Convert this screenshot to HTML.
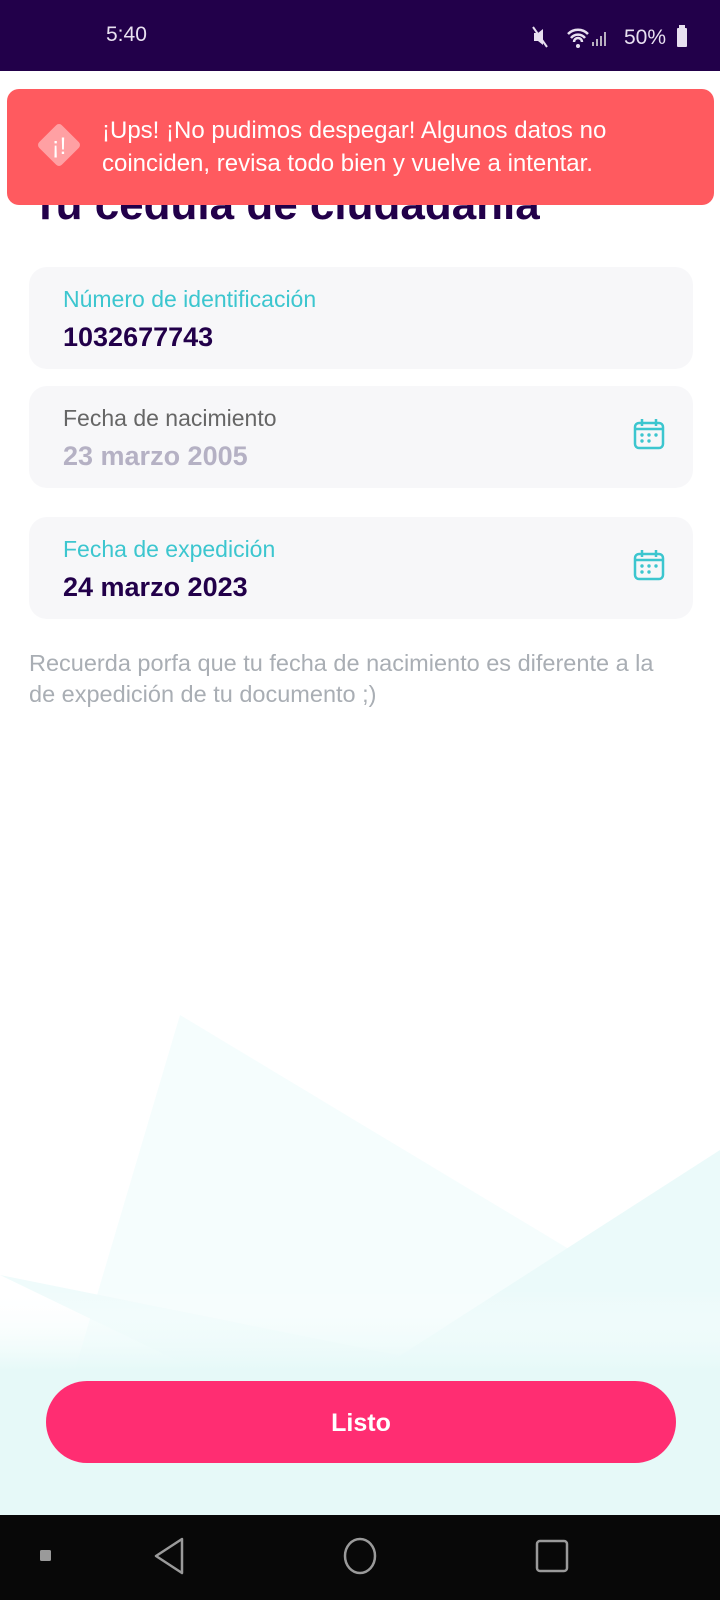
<!DOCTYPE html>
<html><head><meta charset="utf-8"><style>
*{margin:0;padding:0;box-sizing:border-box}
body{width:720px;height:1600px;position:relative;overflow:hidden;background:#fff;font-family:"Liberation Sans",sans-serif}
.sb{position:absolute;left:0;top:0;width:720px;height:71px;background:#22004a;color:#e8e0f0}
.bg{position:absolute;left:0;top:0;width:720px;height:1515px}
.title{position:absolute;left:32px;top:180px;font-size:44px;font-weight:bold;color:#22004a}
.toast{position:absolute;left:7px;top:89px;width:707px;height:116px;background:#ff5a5f;border-radius:12px;color:#fff}
.card{position:absolute;left:29px;width:664px;height:102px;background:#f7f7f9;border-radius:18px}
.lab{position:absolute;left:34px;top:19px;font-size:23px}
.val{position:absolute;left:34px;top:55px;font-size:27px;font-weight:bold}
.cal{position:absolute;right:28px;top:32px}
.note{position:absolute;left:29px;top:648px;font-size:23.5px;line-height:31px;color:#a9aeb4;width:690px}
.btn{position:absolute;left:46px;top:1381px;width:630px;height:82px;border-radius:41px;background:#ff2d72;color:#fff;font-weight:bold;font-size:25px;text-align:center;line-height:84px}
.nav{position:absolute;left:0;top:1515px;width:720px;height:85px;background:#080808}
</style></head><body>
<svg class="bg" viewBox="0 0 720 1515">
<defs><linearGradient id="g" x1="0" y1="0" x2="0" y2="1"><stop offset="0" stop-color="#ffffff" stop-opacity="0"/><stop offset="1" stop-color="#e6f9f8"/></linearGradient></defs>
<polygon points="180,1015 60,1420 720,1420 720,1340" fill="#f5fdfd"/>
<polygon points="0,1275 300,1420 720,1420 720,1420" fill="#effbfb"/>
<polygon points="720,1150 300,1420 720,1420" fill="#ebfafa"/>
<rect x="0" y="1290" width="720" height="80" fill="url(#g)"/>
<rect x="0" y="1370" width="720" height="145" fill="#e6f9f8"/>
</svg>
<div class="sb">
<div style="position:absolute;left:106px;top:23px;font-size:21px">5:40</div>
<svg style="position:absolute;left:532px;top:24px" width="160" height="26" viewBox="0 0 160 26">
<path d="M2 9h4l5-4v16l-5-4H2z" fill="#e8e0f0"/><path d="M1 3l14 20" stroke="#e8e0f0" stroke-width="2"/>
<path d="M36 10a14 14 0 0 1 20 0M39 14a9 9 0 0 1 14 0M42 18a4 4 0 0 1 8 0" stroke="#e8e0f0" stroke-width="2.5" fill="none"/><circle cx="46" cy="22" r="2" fill="#e8e0f0"/>
<path d="M60 22h2v-4h-2zM64 22h2v-7h-2zM68 22h2v-10h-2zM72 22h2v-14h-2z" fill="#b8b0c0"/>
<text x="92" y="20" font-size="21" fill="#e8e0f0" font-family="Liberation Sans">50%</text>
<rect x="145" y="4" width="10" height="19" rx="1" fill="#e8e0f0"/><rect x="147" y="1" width="6" height="3" fill="#e8e0f0"/>
</svg>
</div>
<div class="title">Tu cédula de ciudadanía</div>
<div class="toast">
<svg style="position:absolute;left:24px;top:28px" width="56" height="56" viewBox="0 0 56 56"><rect x="12" y="12" width="32" height="32" rx="4" transform="rotate(45 28 28)" fill="#ffa0a3"/><text x="28" y="37" font-size="24" fill="#fff" text-anchor="middle" font-family="Liberation Sans">¡!</text></svg>
<div style="position:absolute;left:95px;top:25px;font-size:24px;line-height:33px">¡Ups! ¡No pudimos despegar! Algunos datos no<br>coinciden, revisa todo bien y vuelve a intentar.</div>
</div>
<div class="card" style="top:267px"><div class="lab" style="color:#3cc6cf">Número de identificación</div><div class="val" style="color:#22004a">1032677743</div></div>
<div class="card" style="top:386px"><div class="lab" style="color:#666">Fecha de nacimiento</div><div class="val" style="color:#b5b1c4">23 marzo 2005</div>
<svg class="cal" width="32" height="32" viewBox="0 0 32 32"><rect x="2" y="5" width="28" height="25" rx="4" fill="none" stroke="#3cc6cf" stroke-width="2.5"/><path d="M2 11h28M9 1v7M23 1v7" stroke="#3cc6cf" stroke-width="2.5"/><g fill="#3cc6cf"><circle cx="9" cy="17" r="1.7"/><circle cx="16" cy="17" r="1.7"/><circle cx="23" cy="17" r="1.7"/><circle cx="9" cy="23" r="1.7"/><circle cx="16" cy="23" r="1.7"/></g></svg></div>
<div class="card" style="top:517px"><div class="lab" style="color:#3cc6cf">Fecha de expedición</div><div class="val" style="color:#22004a">24 marzo 2023</div>
<svg class="cal" width="32" height="32" viewBox="0 0 32 32"><rect x="2" y="5" width="28" height="25" rx="4" fill="none" stroke="#3cc6cf" stroke-width="2.5"/><path d="M2 11h28M9 1v7M23 1v7" stroke="#3cc6cf" stroke-width="2.5"/><g fill="#3cc6cf"><circle cx="9" cy="17" r="1.7"/><circle cx="16" cy="17" r="1.7"/><circle cx="23" cy="17" r="1.7"/><circle cx="9" cy="23" r="1.7"/><circle cx="16" cy="23" r="1.7"/></g></svg></div>
<div class="note">Recuerda porfa que tu fecha de nacimiento es diferente a la<br>de expedición de tu documento ;)</div>
<div class="btn">Listo</div>
<div class="nav">
<svg width="720" height="85"><rect x="40" y="35" width="11" height="11" rx="1.5" fill="#9a9a9a"/>
<path d="M182 24L156 41l26 17z" fill="none" stroke="#9a9a9a" stroke-width="2.5" stroke-linejoin="round"/>
<ellipse cx="360" cy="41" rx="15" ry="17" fill="none" stroke="#9a9a9a" stroke-width="2.5"/>
<rect x="537" y="26" width="30" height="30" rx="3" fill="none" stroke="#9a9a9a" stroke-width="2.5"/></svg>
</div>
</body></html>
